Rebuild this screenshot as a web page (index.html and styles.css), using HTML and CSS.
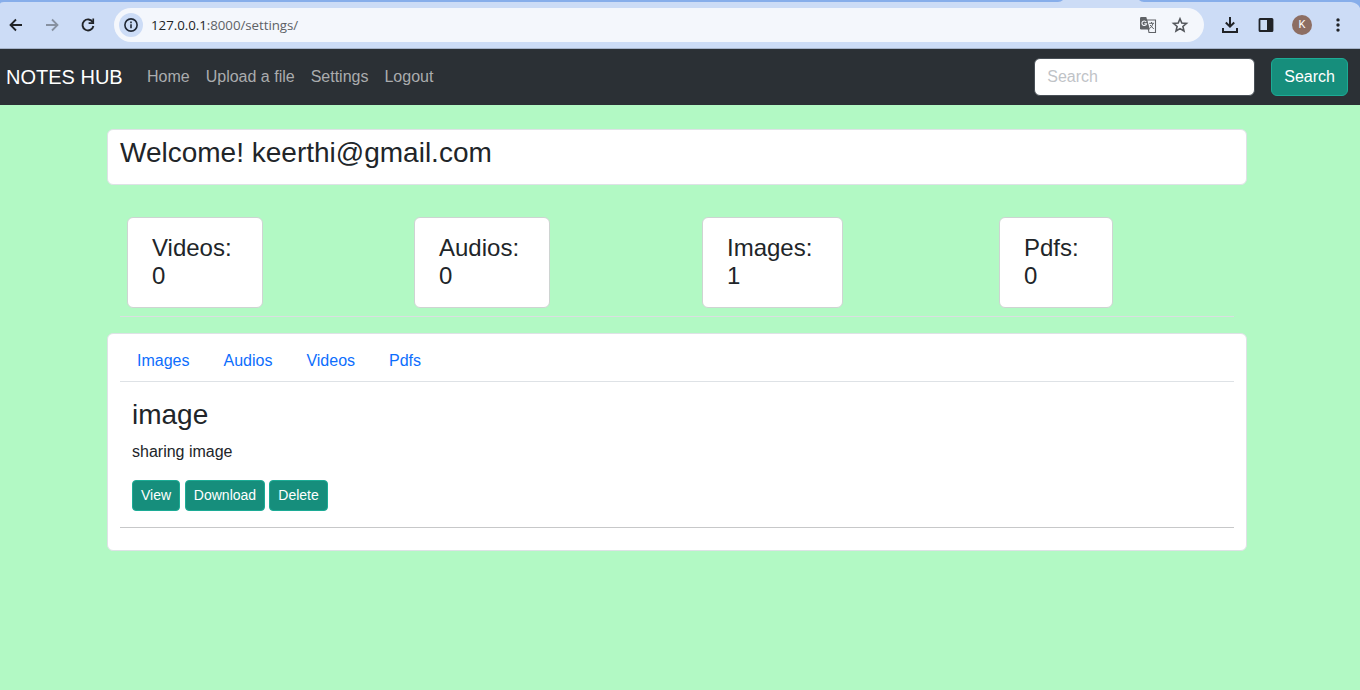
FILE: index.html
```html
<!DOCTYPE html>
<html lang="en">
<head>
<meta charset="utf-8">
<title>Notes Hub</title>
<link rel="stylesheet" href="styles.css">
</head>
<body>
<div class="tabstrip"><svg width="1360" height="8" viewBox="0 0 1360 8"><path d="M0 8V4Q0 2 4 2H1058Q1061 2 1063 0H1139Q1141 2 1144 2H1351Q1358 3 1360 8Z" fill="#ccdcf6"/></svg></div>
<div class="toolbar">
  <svg class="icon" viewBox="0 0 20 20"><path d="M16 10H5M10 4.5 4.5 10 10 15.5" fill="none" stroke="#202327" stroke-width="1.8"/></svg>
  <svg class="icon" viewBox="0 0 20 20"><path d="M4 10H15M10 4.5 15.5 10 10 15.5" fill="none" stroke="#8791a1" stroke-width="1.8"/></svg>
  <svg class="icon" viewBox="0 0 20 20"><path d="M14.8 7.2A5.5 5.5 0 1 0 15.4 11" fill="none" stroke="#202327" stroke-width="1.9"/><path d="M16.1 3.5V9H10.6V7.3H14.4V3.5Z" fill="#202327"/></svg>
  <div class="address">
    <span class="info"><svg width="16" height="16" viewBox="0 0 16 16"><circle cx="8" cy="8" r="6.1" fill="none" stroke="#202834" stroke-width="1.6"/><path d="M7.2 7.2H8.8V11.3H7.2ZM7.2 4.6H8.8V6.2H7.2Z" fill="#202834"/></svg></span>
    <span class="url"><b>127.0.0.1</b>:8000/settings/</span>
    <svg class="translate" width="18" height="18" viewBox="0 0 18 18"><path d="M7.5 4H16.5V16.5H10Z" fill="#f4f7fc" stroke="#606367" stroke-width="1.1"/><path d="M2.2 1H7.3L10.9 13.5H2.2Q1 13.5 1 12.3V2.2Q1 1 2.2 1Z" fill="#606367"/><path d="M7.2 6A2.3 2.3 0 1 0 7.5 7.8H5.3" fill="none" stroke="#f4f7fc" stroke-width="1.1"/><path d="M10.2 7.3H15M12.5 6V7.3M14 7.5Q13 11 10.7 12.5M11 9L14.8 13" fill="none" stroke="#606367"/></svg>
    <svg class="star" width="18" height="18" viewBox="0 0 18 18"><path d="M9 2.7 10.8 7 15.5 7.4 11.9 10.5 13 15 9 12.6 5 15 6.1 10.5 2.5 7.4 7.2 7Z" fill="none" stroke="#54575c" stroke-width="1.6"/></svg>
  </div>
  <div class="actions">
    <svg class="icon" viewBox="0 0 20 20"><path d="M10 2V11.5M5.8 7.5 10 11.7 14.2 7.5M3 13V17H17V13" fill="none" stroke="#202327" stroke-width="2"/></svg>
    <svg class="icon" viewBox="0 0 20 20"><rect x="3.5" y="4" width="13" height="12" rx=".6" fill="none" stroke="#202327" stroke-width="1.8"/><path d="M11 4H17V16H11Z" fill="#202327"/></svg>
    <span class="avatar">K</span>
    <svg class="icon" viewBox="0 0 20 20" fill="#202327"><circle cx="10" cy="4.9" r="1.7"/><circle cx="10" cy="10" r="1.7"/><circle cx="10" cy="15.1" r="1.7"/></svg>
  </div>
</div>
<nav class="navbar">
  <a class="brand">NOTES HUB</a>
  <a class="nav-link">Home</a><a class="nav-link">Upload a file</a><a class="nav-link">Settings</a><a class="nav-link">Logout</a>
  <form class="search"><input class="search-input" type="text" placeholder="Search"><button class="btn" type="button">Search</button></form>
</nav>
<main class="page">
  <section class="card welcome"><h3 class="heading">Welcome! keerthi@gmail.com</h3></section>
  <section class="stats">
    <div class="stat videos">Videos:<br>0</div>
    <div class="stat audios">Audios:<br>0</div>
    <div class="stat images">Images:<br>1</div>
    <div class="stat pdfs">Pdfs:<br>0</div>
  </section>
  <section class="card files">
    <div class="tabs"><a>Images</a><a>Audios</a><a>Videos</a><a>Pdfs</a></div>
    <article class="note">
      <h3 class="heading">image</h3>
      <p class="description">sharing image</p>
      <div class="buttons"><button class="btn small view">View</button><button class="btn small download">Download</button><button class="btn small delete">Delete</button></div>
    </article>
  </section>
</main>
</body>
</html>
```
FILE: styles.css
```css
* { box-sizing: border-box; }
body { margin: 0; height: 690px; overflow: hidden; background: #b2f9c4; color: #212529; font: 16px/24px "Liberation Sans", Arial, sans-serif; }
svg { display: block; flex: none; }
.tabstrip { height: 8px; background: #87aeea; }
.toolbar { height: 41px; display: flex; align-items: flex-start; padding-left: 6px; background: #ccdcf6; border-bottom: 1px solid #a5b3c9; }
.icon { width: 20px; height: 20px; margin: 7px 16px 0 0; }
.address { width: 1090px; height: 34px; display: flex; align-items: center; border-radius: 17px; background: #f4f7fc; padding-left: 5px; flex: none; }
.info { width: 24px; height: 24px; border-radius: 50%; background: #ccdcf6; display: flex; align-items: center; justify-content: center; }
.url { font: 13.3px/20px "Open Sans", sans-serif; letter-spacing: -.04px; color: #5e6266; margin-left: 8px; }
.url b { font-weight: 400; color: #202327; }
.translate { margin-left: auto; }
.star { margin: 0 15px 0 14px; }
.actions { display: flex; margin-left: 16px; }
.avatar { width: 20px; height: 20px; margin: 7px 16px 0 0; border-radius: 50%; background: #8d6e63; color: #fff; font: 11px/20px Roboto, sans-serif; text-align: center; }
.navbar { height: 56px; background: #2b3035; display: flex; align-items: center; padding: 0 12px 0 6px; }
.brand { font-size: 20px; color: #fff; margin-right: 16px; padding-bottom: 1px; width: 117px; white-space: nowrap; }
.nav-link { color: #aaacae; padding: 0 8px; white-space: nowrap; }
.search { display: flex; margin: 0 0 0 auto; gap: 16px; }
.search-input { width: 221px; height: 38px; border: 1px solid #495057; border-radius: 6px; padding: 0 12px 1px; background: #fff; font: inherit; }
.search-input::placeholder { color: #bfc3c7; opacity: 1; }
.btn { height: 38px; padding: 0 12px 1px; border: 1px solid #1cab95; border-radius: 6px; background: #168e7c; color: #fff; font: inherit; }
.page { width: 1140px; margin: 24px 0 0 107px; }
.card { background: #fff; border: 1px solid #dee2e6; border-radius: 6px; }
.heading { margin: 0; font-size: 28px; font-weight: 400; line-height: 34px; }
.welcome { height: 56px; padding: 6px 12px; }
.stats { height: 108px; display: flex; margin: 24px 13px 0; padding: 8px 0 0 7px; border-bottom: 1px solid #d9dfe0; }
.stat { height: 91px; padding: 16px 24px; background: #fff; border: 1px solid #ced4d2; border-radius: 6px; font-size: 24px; line-height: 28px; white-space: nowrap; }
.videos { width: 136px; }
.audios { width: 136px; margin-left: 151px; }
.images { width: 141px; margin-left: 152px; }
.pdfs { width: 114px; margin-left: 156px; }
.files { height: 218px; margin-top: 16px; padding: 5px 12px 0; }
.tabs { height: 43px; display: flex; gap: 34px; padding: 10px 17px 0; border-bottom: 1px solid #dee2e6; color: #0d6efd; }
.note { height: 146px; padding: 16px 12px; border-bottom: 1px solid #c7c8c9; }
.description { margin: 8px 0 16px; }
.buttons { display: flex; gap: 4px; }
.small { height: 31px; padding: 0; border-radius: 4px; font-size: 14px; line-height: 21px; }
.view { width: 48px; margin-right: 1px; }
.download { width: 80px; }
.delete { width: 59px; }
```
